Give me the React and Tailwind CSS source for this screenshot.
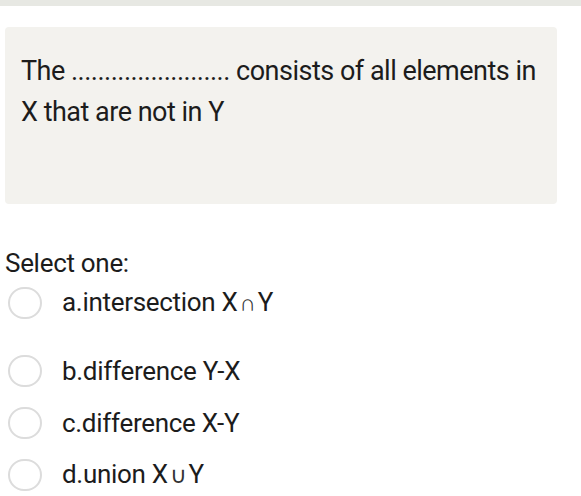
import React from 'react';

const options = [
  { id: 'a', label: 'a.intersection X', op: '∩', tail: 'Y', gap: 'h-[68px]' },
  { id: 'b', label: 'b.difference Y-X', gap: 'h-[52px]' },
  { id: 'c', label: 'c.difference X-Y', gap: 'h-[52px]' },
  { id: 'd', label: 'd.union X', op: '∪', tail: 'Y', gap: 'h-[52px]' },
];

const Radio = () => (
  <span className="w-[34px] h-[32px] rounded-full border-2 border-[#dcdcdc] bg-white shrink-0" />
);

export default function App() {
  return (
    <div
      className="w-[581px] h-[496px] bg-white overflow-hidden text-[#1c1c1c]"
      style={{ fontFamily: 'Roboto, "Liberation Sans", sans-serif' }}
    >
      <div className="h-[6px] bg-[#e7e8e3]" />
      <div className="px-[5px] pt-[21px]">
        <div className="w-[552px] h-[177px] bg-[#f3f2ee] rounded-[4px] pl-[16px] pt-[24px] text-[27px] leading-[41px] tracking-[-0.5px]">
          <p className="whitespace-nowrap">The ........................ consists of all elements in</p>
          <p>X that are not in Y</p>
        </div>
      </div>
      <div className="pl-[5px] pt-[44px] text-[26px] tracking-[-0.3px]">
        <p className="leading-[30px] h-[30px]">Select one:</p>
        <div className="mt-[8px] flex flex-col">
          {options.map((o) => (
            <div key={o.id} className={`flex items-center ${o.gap}`}>
              <div className="flex items-center h-[34px] w-full self-start">
                <span className="pl-[3px] flex"><Radio /></span>
                <span className="ml-[20px] leading-[34px]">
                  {o.label}
                  {o.op && (
                    <>
                      <span className="text-[23px] mx-[2px] text-[#333]">{o.op}</span>
                      {o.tail}
                    </>
                  )}
                </span>
              </div>
            </div>
          ))}
        </div>
      </div>
    </div>
  );
}
